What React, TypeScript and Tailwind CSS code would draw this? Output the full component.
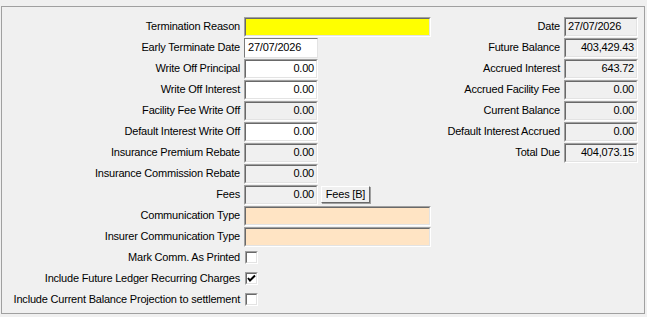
import React from 'react';

type Tone = 'white' | 'gray' | 'yellow' | 'peach';

const toneBg: Record<Tone, string> = {
  white: 'bg-white',
  gray: 'bg-[#f0f0f0]',
  yellow: 'bg-[#ffff00]',
  peach: 'bg-[#ffe4c4]',
};

// classic sunken 3D edit border
const Sunken = ({ tone, width, align = 'right', children }: { tone: Tone; width: string; align?: 'left' | 'right'; children?: React.ReactNode }) => (
  <div className={`${width} h-[20px] border border-t-[#a0a0a0] border-l-[#a0a0a0] border-b-white border-r-white`}>
    <div
      className={`h-full border border-t-[#696969] border-l-[#696969] border-b-[#e3e3e3] border-r-[#e3e3e3] ${toneBg[tone]} flex items-center px-[2px] ${align === 'right' ? 'justify-end' : 'justify-start'}`}
    >
      {children}
    </div>
  </div>
);

const Check = ({ checked }: { checked?: boolean }) => (
  <div className="ml-[1px] w-[13px] h-[13px] border border-t-[#a0a0a0] border-l-[#a0a0a0] border-b-white border-r-white">
    <div className="w-full h-full bg-white border border-t-[#696969] border-l-[#696969] border-b-[#e3e3e3] border-r-[#e3e3e3] flex items-center justify-center">
      {checked && (
        <svg width="9" height="9" viewBox="0 0 9 9">
          <path d="M1 4 L3 6.5 L8 1.5" fill="none" stroke="#000" strokeWidth="2" />
        </svg>
      )}
    </div>
  </div>
);

const Row = ({ label, children, right }: { label: string; children?: React.ReactNode; right?: [string, React.ReactNode] }) => (
  <div className="flex items-center h-[21px]">
    <div className="w-[238px] text-right whitespace-nowrap">{label}</div>
    <div className="ml-[4px] w-[187px] flex items-center">{children}</div>
    {right && (
      <>
        <div className="w-[129px] text-right whitespace-nowrap">{right[0]}</div>
        <div className="ml-[4px]">{right[1]}</div>
      </>
    )}
  </div>
);

const num = (tone: Tone, v: string) => <Sunken tone={tone} width="w-[74px]">{v}</Sunken>;

export default function App() {
  return (
    <div
      className="w-[647px] h-[317px] bg-[#f0f0f0] pt-[6px] text-[11px] leading-none tracking-[-0.2px] text-black overflow-hidden"
      style={{ fontFamily: '"Liberation Sans", Arial, sans-serif' }}
    >
      <div className="ml-[1px] w-[644px] h-[308px] border border-[#a0a0a0] pt-[9px]">
        <Row label="Termination Reason" right={['Date', <Sunken tone="gray" width="w-[74px]" align="left">27/07/2026</Sunken>]}>
          <Sunken tone="yellow" width="w-[187px]" />
        </Row>
        <Row label="Early Terminate Date" right={['Future Balance', num('gray', '403,429.43')]}>
          <div className="w-[74px] h-[20px] border border-t-[#7a7a7a] border-l-[#7a7a7a] border-b-[#e3e3e3] border-r-[#e3e3e3] bg-white flex items-center px-[3px]">
            27/07/2026
          </div>
        </Row>
        <Row label="Write Off Principal" right={['Accrued Interest', num('gray', '643.72')]}>
          {num('white', '0.00')}
        </Row>
        <Row label="Write Off Interest" right={['Accrued Facility Fee', num('gray', '0.00')]}>
          {num('white', '0.00')}
        </Row>
        <Row label="Facility Fee Write Off" right={['Current Balance', num('gray', '0.00')]}>
          {num('gray', '0.00')}
        </Row>
        <Row label="Default Interest Write Off" right={['Default Interest Accrued', num('gray', '0.00')]}>
          {num('white', '0.00')}
        </Row>
        <Row label="Insurance Premium Rebate" right={['Total Due', num('gray', '404,073.15')]}>
          {num('gray', '0.00')}
        </Row>
        <Row label="Insurance Commission Rebate">{num('gray', '0.00')}</Row>
        <Row label="Fees">
          {num('gray', '0.00')}
          <button className="ml-[3px] w-[49px] h-[17px] bg-[#f0f0f0] border border-t-white border-l-white border-b-[#696969] border-r-[#696969] shadow-[1px_1px_0_#a0a0a0] flex items-center justify-center">
            Fees [B]
          </button>
        </Row>
        <Row label="Communication Type">
          <Sunken tone="peach" width="w-[187px]" />
        </Row>
        <Row label="Insurer Communication Type">
          <Sunken tone="peach" width="w-[187px]" />
        </Row>
        <Row label="Mark Comm. As Printed">
          <Check />
        </Row>
        <Row label="Include Future Ledger Recurring Charges">
          <Check checked />
        </Row>
        <Row label="Include Current Balance Projection to settlement">
          <Check />
        </Row>
      </div>
    </div>
  );
}
